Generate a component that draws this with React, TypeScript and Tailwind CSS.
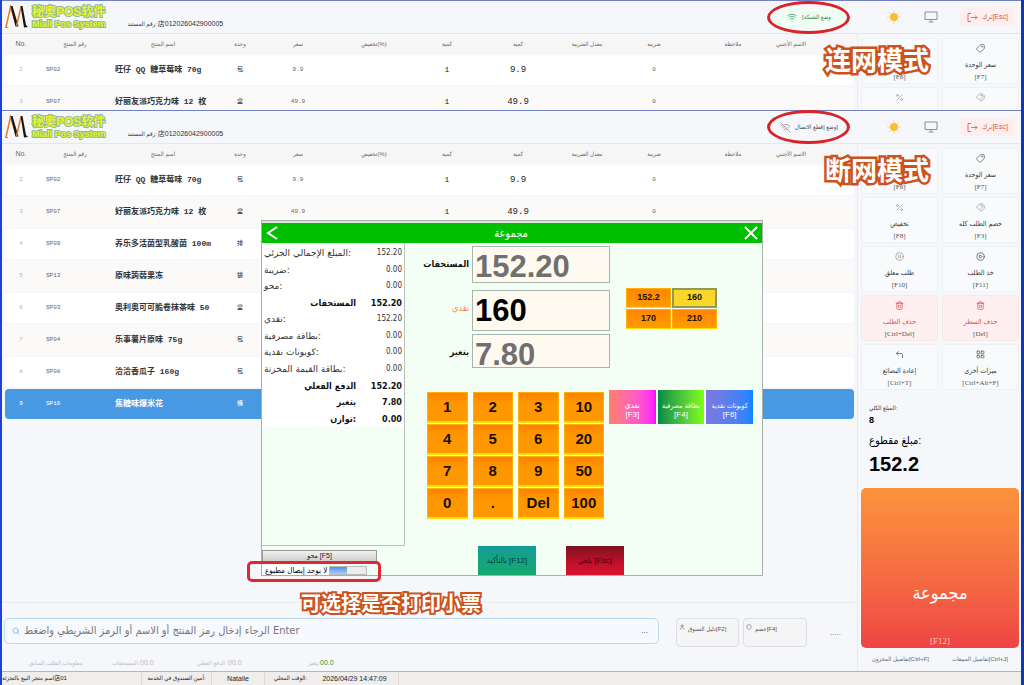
import type { ComponentType } from "react";
import {
  CirclePause,
  CirclePlay,
  CornerUpLeft,
  Hash,
  LayoutGrid,
  Percent,
  Search,
  Shield,
  Tag,
  Tags,
  Trash2,
  User,
  Wifi,
  WifiOff,
} from "lucide-react";

interface IProduct {
  no: number;
  code: string;
  name: string;
  unit: string;
  price: string;
}

interface IAction {
  label?: string;
  hotkey?: string;
  icon: ComponentType<{ className?: string; strokeWidth?: number }>;
  danger?: boolean;
  faded?: boolean;
}

const products: IProduct[] = [
  { no: 2, code: "SP02", name: "旺仔 QQ 糖草莓味 70g", unit: "包", price: "9.9" },
  { no: 3, code: "SP07", name: "好丽友派巧克力味 12 枚", unit: "盒", price: "49.9" },
  { no: 4, code: "SP09", name: "养乐多活菌型乳酸菌 100m", unit: "排", price: "" },
  { no: 5, code: "SP13", name: "原味蒟蒻果冻", unit: "袋", price: "" },
  { no: 6, code: "SP03", name: "奥利奥可可脆卷抹茶味 50", unit: "盒", price: "" },
  { no: 7, code: "SP04", name: "乐事薯片原味 75g", unit: "包", price: "" },
  { no: 8, code: "SP08", name: "洽洽香瓜子 160g", unit: "包", price: "" },
  { no: 9, code: "SP16", name: "焦糖味爆米花", unit: "桶", price: "" },
];

const columns = [
  { label: "No.", width: "w-[32px]" },
  { label: "رقم المنتج", width: "w-[76px]" },
  { label: "اسم المنتج", width: "w-[100px]" },
  { label: "وحدة", width: "w-[54px]" },
  { label: "سعر", width: "w-[62px]" },
  { label: "تخفيض(%)", width: "w-[90px]" },
  { label: "كمية", width: "w-[56px]" },
  { label: "كمية", width: "w-[86px]" },
  { label: "معدل الضريبة", width: "w-[52px]" },
  { label: "ضريبة", width: "w-[82px]" },
  { label: "ملاحظة", width: "w-[76px]" },
  { label: "الاسم الأجنبي", width: "" },
];

const actions: IAction[] = [
  { hotkey: "[F6]", icon: Hash },
  { label: "سعر الوحدة", hotkey: "[F7]", icon: Tag },
  { label: "تخفيض", hotkey: "[F8]", icon: Percent, faded: true },
  { label: "خصم الطلب كله", hotkey: "[F3]", icon: Tags, faded: true },
  { label: "طلب معلق", hotkey: "[F10]", icon: CirclePause, faded: true },
  { label: "خذ الطلب", hotkey: "[F11]", icon: CirclePlay },
  { label: "حذف الطلب", hotkey: "[Ctrl+Del]", icon: Trash2, danger: true },
  { label: "حذف السطر", hotkey: "[Del]", icon: Trash2, danger: true },
  { label: "إعادة البضائع", hotkey: "[Ctrl+T]", icon: CornerUpLeft },
  { label: "ميزات أخرى", hotkey: "[Ctrl+Alt+F]", icon: LayoutGrid },
];

// only the tops of the second row show in the upper screen
const upperActions: IAction[] = [
  actions[0],
  actions[1],
  { icon: Percent, faded: true },
  { icon: Tags, faded: true },
];

const summary = [
  { label: "المبلغ الإجمالي الجزئي:", value: "152.20" },
  { label: "ضريبة:", value: "0.00" },
  { label: "محو:", value: "0.00" },
  { label: "المستحقات", value: "152.20", bold: true },
  { label: "نقدي:", value: "152.20" },
  { label: "بطاقة مصرفية:", value: "0.00" },
  { label: "كوبونات نقدية:", value: "0.00" },
  { label: "بطاقة القيمة المخزنة:", value: "0.00" },
  { label: "الدفع الفعلي", value: "152.20", bold: true },
  { label: "يتغير", value: "7.80", bold: true },
  { label: "توازن:", value: "0.00", bold: true },
];

const keys = ["1", "2", "3", "10", "4", "5", "6", "20", "7", "8", "9", "50", "0", ".", "Del", "100"];

function Logo() {
  return (
    <div className="flex items-center gap-[4px]">
      <svg className="h-[24px] w-[23px]" viewBox="0 0 23 24" fill="none">
        <path d="M1 22 L5.500 2 L11.500 21" stroke="#f07a1c" strokeWidth="1.500" />
        <path d="M5.500 1 L7.500 1 L13.500 21.500 L10.500 21.500 Z" fill="#161616" />
        <path d="M11.500 21 L16 2" stroke="#f07a1c" strokeWidth="1.500" />
        <path d="M15.500 1 L17.500 1 L21 20 L23 22 L19 22.500 Z" fill="#161616" />
        <path d="M0 22.500 L3 22.500" stroke="#f07a1c" />
      </svg>
      <div className="font-bold whitespace-nowrap text-[#e8f51a] [-webkit-text-stroke:2px_#8fb8a0] [paint-order:stroke]">
        <p className="text-[12px] leading-[13px]">秘奥POS软件</p>
        <p className="text-[9px] leading-[10px]">Miall Pos System</p>
      </div>
    </div>
  );
}

function Header({ online }: { online: boolean }) {
  return (
    <header className="flex h-[33px] items-center border-b border-[#e3e8ee] bg-[#f5f7fb] pr-[6px] pl-[3px]">
      <Logo />
      <p className="mt-[14px] ml-[22px] flex gap-[1px] text-[7px] leading-[10px] whitespace-nowrap text-[#333]">
        <span className="text-[6px]">رقم المستند:</span>
        <span>店012026042900005</span>
      </p>
      {online ? (
        <p className="ml-auto flex h-[20px] w-[76px] items-center justify-center gap-[5px] rounded-sm bg-[#effdf4] text-[6px] text-[#2f7d4f]">
          <Wifi className="size-[10px] text-[#46a06c]" />
          <bdo dir="ltr">
            [<bdi>وضع الشبكة</bdi>
          </bdo>
        </p>
      ) : (
        <p className="ml-auto flex h-[20px] w-[76px] items-center justify-center gap-[4px] text-[6px] whitespace-nowrap text-[#444]">
          <WifiOff className="size-[11px] text-[#a596a8]" strokeWidth={2} />
          <span>
            <bdi>وضع [قطع الاتصال</bdi>]
          </span>
        </p>
      )}
      <button aria-label="Theme" className="ml-[40px]">
        <svg className="size-[14px]" viewBox="0 0 14 14" stroke="#fbd38a" strokeLinecap="round">
          <circle cx="7" cy="7" r="4.200" fill="#fbbf37" stroke="none" />
          <path d="M7 .5v1M7 12.500v1M.5 7h1M12.500 7h1M2.400 2.400l.6.6M11 11l.6.6M2.400 11.600l.6-.6M11 3l.6-.6" />
        </svg>
      </button>
      <button aria-label="Display" className="ml-[23px]">
        <svg className="h-[12px] w-[14px]" viewBox="0 0 14 12" fill="none" stroke="#8a8f98">
          <path d="M1 1h12v7.500H1zM7 8.500v2.500M4.500 11h5" />
        </svg>
      </button>
      <button className="ml-[22px] flex h-[18px] w-[55px] items-center justify-center gap-[4px] rounded-sm bg-[#feefef] text-[7px] text-[#d9534f]">
        <svg className="h-[9px] w-[11px]" viewBox="0 0 11 9" fill="none" stroke="#e66a66">
          <path d="M4 .5H1v8h3M4 4.500h6M8 2.500l2 2-2 2" />
        </svg>
        <span>ترك[Esc]</span>
      </button>
    </header>
  );
}

function ProductTable({ rows, selected }: { rows: IProduct[]; selected?: number }) {
  return (
    <table className="w-full table-fixed border-separate border-spacing-x-0 border-spacing-y-[2px] text-center font-['Liberation_Mono','Noto_Sans_CJK_SC',monospace] text-[6px] leading-[10px] text-[#666]">
      <thead>
        <tr className="h-[18px] bg-[#f6f6f7] font-['Liberation_Sans','DejaVu_Sans_Condensed','DejaVu_Sans',sans-serif]">
          {columns.map((column, index) => (
            <th
              key={index}
              className={`${column.width} p-0 font-normal whitespace-nowrap first:text-[7px] last:pl-[5px] last:text-left`}
            >
              {column.label}
            </th>
          ))}
        </tr>
      </thead>
      <tbody>
        {rows.map((row) => {
          const active = row.no === selected;
          return (
            <tr
              key={row.no}
              className={
                active ? "h-[30px] bg-[#4799e3] text-white" : "h-[30px] odd:bg-white even:bg-[#fbfaf9]"
              }
            >
              <td className={`rounded-l-[4px] p-0 ${active ? "" : "text-[#b5b5b5]"}`}>{row.no}</td>
              <td className="p-0 pl-[9px] text-left">{row.code}</td>
              <td
                className={`p-0 pl-[2px] text-left text-[8px] font-bold whitespace-nowrap ${active ? "" : "text-[#333]"}`}
              >
                {row.name}
              </td>
              <td className={`p-0 ${active ? "" : "text-[#222]"}`}>{row.unit}</td>
              <td className="p-0">{row.price}</td>
              <td className="p-0"></td>
              <td className="p-0 text-[8px] text-[#222]">{row.price && "1"}</td>
              <td className="p-0 text-[9px] text-[#222]">{row.price}</td>
              <td className="p-0"></td>
              <td className="p-0">{row.price && "0"}</td>
              <td className="p-0"></td>
              <td className="rounded-r-[4px] p-0"></td>
            </tr>
          );
        })}
      </tbody>
    </table>
  );
}

function ActionGrid({ items }: { items: IAction[] }) {
  return (
    <div className="grid grid-cols-2 gap-x-[4px] gap-y-[3px]">
      {items.map(({ label, hotkey, icon: Icon, danger, faded }, index) => (
        <button
          key={index}
          className={`flex h-[46px] flex-col items-center rounded-[4px] border pt-[5px] whitespace-nowrap ${
            danger
              ? "border-[#fbe6e6] bg-[#fef0f0] text-[#e0484e]"
              : "border-[#eef1f5] bg-[#f9fafc] text-[#333]"
          }`}
        >
          <Icon
            className={`size-[9px] ${faded ? "text-[#999]" : danger ? "" : "text-[#555]"} ${
              Icon === Tag || Icon === Tags ? "-scale-x-100" : ""
            }`}
            strokeWidth={2}
          />
          <span className="mt-[6px] h-[12px] text-[7px] leading-[12px]">{label}</span>
          <span className="mt-[2px] font-['Liberation_Serif',serif] text-[7px] leading-[9px] text-[#555]">
            {hotkey}
          </span>
        </button>
      ))}
    </div>
  );
}

const fieldTones = {
  due: "h-[37px] pt-[4px] text-[#707070]",
  cash: "h-[41px] pt-[1px] text-black",
  change: "h-[34px] pt-[7px] text-[#707070]",
};

function Field({ label, value, tone }: { label: string; value: string; tone: "due" | "cash" | "change" }) {
  return (
    <div className="flex gap-[3px]">
      <label
        htmlFor={tone}
        className={`mt-[10px] w-[64px] text-right text-[9px] leading-[16px] whitespace-nowrap ${
          tone === "cash" ? "text-[#ff7f50]" : "font-bold text-[#111]"
        }`}
      >
        {label}
      </label>
      <input
        id={tone}
        readOnly
        value={value}
        className={`w-[138px] border border-[#a9b5ac] bg-[#fffaf0] px-[2px] text-[31px] leading-[26px] font-bold ${fieldTones[tone]}`}
      />
    </div>
  );
}

function PaymentDialog() {
  return (
    <section
      role="dialog"
      aria-label="مجموعة"
      className="absolute top-[220px] left-[259px] flex h-[356px] w-[502px] flex-col border border-[#a8b0a8] bg-[#f3fef4]"
    >
      <div className="h-[2px] shrink-0 bg-[#dfe3df]" />
      <div className="flex h-[20px] shrink-0 items-center justify-between bg-[#00bf00] px-[4px] text-white">
        <button aria-label="Back">
          <svg className="h-[14px] w-[12px]" viewBox="0 0 12 14" fill="none" stroke="currentColor" strokeWidth="2">
            <path d="M11 1 L2 7 L11 13" />
          </svg>
        </button>
        <h2 className="text-[11px] leading-[16px]">مجموعة</h2>
        <button aria-label="Close">
          <svg className="size-[14px]" viewBox="0 0 14 14" fill="none" stroke="currentColor" strokeWidth="2">
            <path d="M1 1 L13 13 M13 1 L1 13" />
          </svg>
        </button>
      </div>
      <div className="flex flex-1">
        <div className="flex w-[143px] flex-col">
          <div className="flex-1 border-r border-b border-[#b9c2b9] pt-[2px]">
            <table className="h-[182px] w-full bg-white font-['DejaVu_Sans',sans-serif] text-[9px] leading-[12px] text-[#333]">
              <tbody>
                {summary.map((line) => (
                  <tr key={line.label} className={line.bold ? "font-bold text-[#111]" : ""}>
                    <th
                      className={`p-0 whitespace-nowrap ${
                        line.bold
                          ? "pr-[2px] text-right font-['DejaVu_Sans_Condensed','DejaVu_Sans',sans-serif]"
                          : "pl-[2px] text-left font-normal"
                      }`}
                    >
                      {line.label}
                    </th>
                    <td
                      className={`w-[46px] p-0 pr-[2px] text-right font-['DejaVu_Sans_Condensed','DejaVu_Sans',sans-serif] ${
                        line.bold ? "" : "text-[8px]"
                      }`}
                    >
                      {line.value}
                    </td>
                  </tr>
                ))}
              </tbody>
            </table>
          </div>
          <button className="mt-[4px] h-[12px] w-[115px] border border-[#999] bg-linear-to-b from-[#f2f2f2] to-[#cfcfcf] text-[7px] leading-[10px] text-[#222]">
            محو [F5]
          </button>
          <label className="mt-[4px] flex h-[9px] w-[105px] items-center justify-between bg-white pl-[3px] text-[8px] leading-[9px] whitespace-nowrap text-black">
            لا يوجد إيصال مطبوع
            <input type="checkbox" className="peer sr-only" />
            <span className="flex h-[9px] w-[38px] border border-[#bbb] bg-[#ececec]">
              <span className="w-[17px] bg-linear-to-b from-[#4f8fe0] to-[#a9d0fb]" />
            </span>
          </label>
        </div>
        <div className="flex flex-1 flex-col">
          <div className="flex items-start pt-[3px]">
            <div>
              <Field label="المستحقات" value="152.20" tone="due" />
              <div className="mt-[7px] mb-[3px]">
                <Field label="نقدي" value="160" tone="cash" />
              </div>
              <Field label="يتغير" value="7.80" tone="change" />
            </div>
            <div className="mt-[42px] ml-[16px] grid w-[91px] grid-cols-2 gap-[1px] text-[9px] font-bold text-[#1a1000]">
              {["152.2", "160", "170", "210"].map((amount) => (
                <button
                  key={amount}
                  className={
                    amount === "160"
                      ? "h-[20px] border-2 border-[#8f9a52] bg-[#fbd62b]"
                      : "h-[20px] border border-[#ffb000] border-b-[#ffe000] bg-linear-to-b from-[#ff8500] to-[#ff9c00]"
                  }
                >
                  {amount}
                </button>
              ))}
            </div>
          </div>
          <div className="mt-[22px] ml-[22px] flex items-start gap-[5px]">
            <div className="grid w-[177px] grid-cols-4 gap-x-[5px] gap-y-[1px] pt-[2px] text-[15px] font-bold text-[#1a1000]">
              {keys.map((key) => (
                <button
                  key={key}
                  className="h-[31px] border border-[#ffb000] border-b-2 border-b-[#ffe000] bg-linear-to-b from-[#ff8000] via-[#ff9700] via-35% to-[#ff9900]"
                >
                  {key}
                </button>
              ))}
            </div>
            <div className="grid w-[144px] grid-cols-3 gap-[2px] text-[8px] leading-[9px] whitespace-nowrap text-white">
              <button className="h-[34px] bg-linear-to-r from-[#ff7f66] to-[#ff00ff] pt-[6px]">
                نقدي
                <br />
                [F3]
              </button>
              <button className="h-[34px] bg-linear-to-r from-[#008a45] to-[#80ff00] pt-[6px]">
                <span className="text-[7px]">بطاقة مصرفية</span>
                <br />
                [F4]
              </button>
              <button className="h-[34px] bg-linear-to-r from-[#7b78e0] to-[#0a84ff] pt-[6px]">
                <span className="text-[7px]">كوبونات نقدية</span>
                <br />
                [F6]
              </button>
            </div>
          </div>
          <div className="mt-auto ml-[73px] flex gap-[30px] text-[8px]">
            <button className="h-[29px] w-[58px] bg-linear-to-b from-[#169c96] to-[#17a96e] whitespace-nowrap text-[#063b35]">
              بالتأكيد [F12]
            </button>
            <button className="h-[29px] w-[58px] bg-linear-to-b from-[#7d1220] via-[#b80f2a] to-[#dc1430] whitespace-nowrap text-[#4e0010]">
              يلغي [Esc]
            </button>
          </div>
        </div>
      </div>
    </section>
  );
}

function SearchBar() {
  return (
    <div className="flex items-start border-t border-[#e8ebf0] pt-[15px] pl-[2px]">
      <div className="flex h-[26px] flex-1 items-center rounded-[5px] border border-[#bcd9f1] bg-[#f6fafe] px-[7px]">
        <Search className="size-[8px] text-[#6aa5e0]" />
        <input
          type="text"
          aria-label="Search"
          placeholder="الرجاء إدخال رمز المنتج أو الاسم أو الرمز الشريطي واضغط Enter"
          className="ml-[4px] flex-1 font-['DejaVu_Sans_Condensed','DejaVu_Sans',sans-serif] text-[11px] outline-none placeholder:text-[#777]"
        />
        <span className="mr-[3px] text-[8px] text-[#444]">...</span>
      </div>
      <button className="ml-[17px] flex h-[29px] w-[63px] gap-[3px] rounded-[4px] border border-[#dcdfe3] bg-[#f5f5f6] pt-[5px] pl-[2px] text-[6px] leading-[10px] whitespace-nowrap text-[#555]">
        <User className="size-[6px]" />
        دليل التسوق[F2]
      </button>
      <button className="ml-[4px] flex h-[29px] w-[64px] gap-[3px] rounded-[4px] border border-[#dcdfe3] bg-[#f5f5f6] pt-[5px] pl-[2px] text-[6px] leading-[10px] whitespace-nowrap text-[#555]">
        <Shield className="size-[6px]" />
        خصم[F4]
      </button>
      <span className="w-[50px] pt-[10px] pr-[16px] text-right text-[8px] leading-[10px] text-[#666]">.....</span>
    </div>
  );
}

function StatusBar() {
  return (
    <footer className="flex h-[14px] items-center border-t border-[#b4b6ba] bg-[#f0eeed] text-[6px] leading-[13px] whitespace-nowrap text-[#222]">
      <p className="flex w-[140px] border-r border-[#dedbd9]">
        <span>اسم متجر البيع بالتجزئة</span>
        <span>店01</span>
      </p>
      <p className="w-[70px] border-r border-[#dedbd9] text-center">أمين الصندوق في الخدمة:</p>
      <p className="w-[53px] border-r border-[#dedbd9] text-center text-[7px]">Natalie</p>
      <p className="w-[46px] pr-[4px] text-right">الوقت المحلي:</p>
      <p className="w-[88px] border-r border-[#dedbd9] text-center text-[7px]">2026/04/29 14:47:09</p>
    </footer>
  );
}

export default function App() {
  return (
    <div className="relative flex min-h-screen flex-col overflow-hidden border-r-[3px] border-l-2 border-r-[#1237b5] border-l-[#1d43d6] bg-[#f5f7fb] font-['Liberation_Sans','DejaVu_Sans_Condensed','DejaVu_Sans','Noto_Sans_CJK_SC',sans-serif]">
      <div className="h-[110px] overflow-hidden border-t border-[#7280c4]">
        <Header online />
        <div className="-mt-px flex">
          <main className="flex-1 px-[3px]">
            <ProductTable rows={products.slice(0, 2)} />
          </main>
          <aside className="w-[164px] border-l border-[#e8ebf0] pt-[5px] pr-[2px] pl-[3px]">
            <ActionGrid items={upperActions} />
          </aside>
        </div>
      </div>

      <div className="flex flex-1 flex-col border-t border-[#7280c4]">
        <Header online={false} />
        <div className="-mt-px flex flex-1">
          <main className="flex flex-1 flex-col">
            <div className="flex-1 px-[3px]">
              <ProductTable rows={products} selected={9} />
            </div>
            <SearchBar />
            <div className="flex h-[24px] items-center pt-[8px] pl-[27px] text-[6px] leading-[10px] whitespace-nowrap text-[#b9bcc2]">
              <span className="w-[83px]">معلومات الطلب السابق:</span>
              <span className="w-[28px]">المستحقات:</span>
              <span className="w-[57px] text-[7px]">00.0</span>
              <span className="w-[31px]">الدفع الفعلي:</span>
              <span className="w-[80px] text-[7px]">00.0</span>
              <span>يتغير:</span>
              <span className="text-[7px] text-[#1c9a2c]">00.0</span>
            </div>
          </main>
          <aside className="flex w-[164px] flex-col border-l border-[#e8ebf0] pt-[5px] pr-[2px] pl-[3px]">
            <ActionGrid items={actions} />
            <div className="pt-[12px] pl-[8px] text-black">
              <p className="text-[6px] leading-[12px] text-[#333]">المبلغ الكلي:</p>
              <p className="text-[9px] leading-[12px] font-bold">8</p>
              <p className="mt-[5px] text-[11px] leading-[18px]">مبلغ مقطوع:</p>
              <p className="mt-[3px] text-[20px] leading-[24px] font-bold">152.2</p>
            </div>
            <button className="mt-[12px] flex flex-1 flex-col items-center justify-end rounded-[5px] bg-linear-to-b from-[#fc933c] to-[#ee4444] text-white">
              <span className="text-[18px] leading-[24px]">مجموعة</span>
              <span className="mt-[30px] font-['Liberation_Serif',serif] text-[9px] leading-[13px] text-[#fdc9c0]">
                [F12]
              </span>
            </button>
            <div className="flex h-[23px] items-center justify-between px-[11px] text-[6px] whitespace-nowrap text-[#666]">
              <a href="#stock">تفاصيل المخزون[Ctrl+F]</a>
              <a href="#sales">تفاصيل المبيعات[Ctrl+J]</a>
            </div>
          </aside>
        </div>
        <StatusBar />
      </div>

      <PaymentDialog />

      {/* Callouts drawn over the two screens */}
      <div className="absolute top-[1px] left-[765px] h-[33px] w-[83px] rounded-[50%] border-[3px] border-[#d8232a]" />
      <div className="absolute top-[110px] left-[765px] h-[34px] w-[83px] rounded-[50%] border-[3px] border-[#d8232a]" />
      <div className="absolute top-[561px] left-[245px] h-[21px] w-[134px] rounded-[5px] border-[3px] border-[#dc2a30]" />
      <p className="absolute top-[43px] left-[823px] text-[26px] leading-[36px] font-bold whitespace-nowrap text-white [-webkit-text-stroke:5px_#cb521d] [paint-order:stroke]">
        连网模式
      </p>
      <p className="absolute top-[153px] left-[823px] text-[26px] leading-[36px] font-bold whitespace-nowrap text-white [-webkit-text-stroke:5px_#cb521d] [paint-order:stroke]">
        断网模式
      </p>
      <p className="absolute top-[592px] left-[299px] text-[20px] leading-[24px] font-bold whitespace-nowrap text-white [-webkit-text-stroke:4px_#cb521d] [paint-order:stroke]">
        可选择是否打印小票
      </p>
      <div className="absolute top-[589px] -right-[3px] h-[39px] w-[3px] bg-white" />
    </div>
  );
}
